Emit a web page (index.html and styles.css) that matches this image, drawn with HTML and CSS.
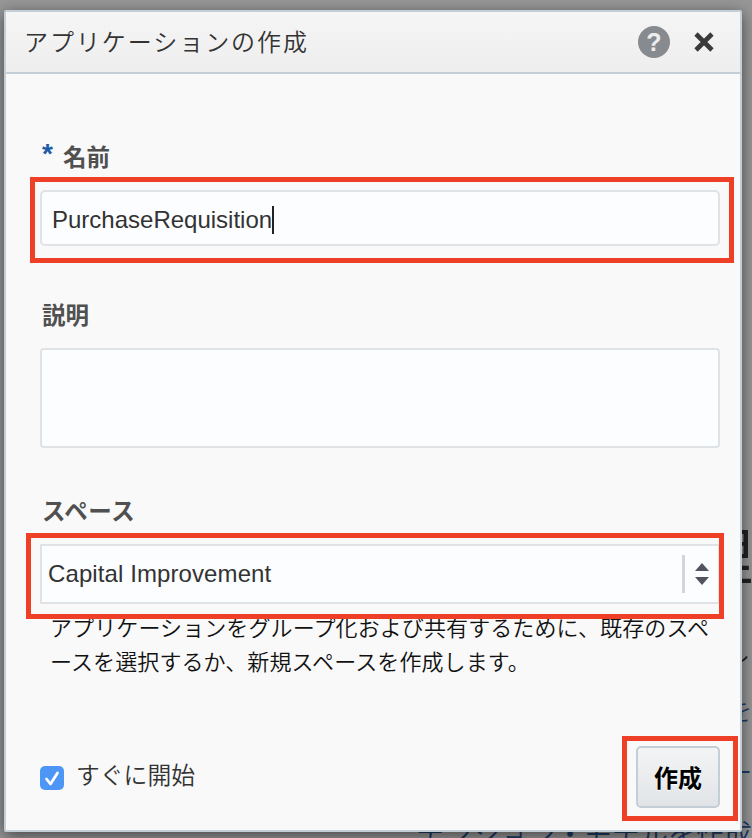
FILE: index.html
```html
<!DOCTYPE html>
<html lang="ja">
<head>
<meta charset="utf-8">
<title>アプリケーションの作成</title>
<link rel="stylesheet" href="styles.css">
</head>
<body>
<div class="backdrop" aria-hidden="true">
  <span class="ghost ghost-heading">理</span>
  <span class="ghost ghost-text">し</span>
  <span class="ghost ghost-link link-a">を</span>
  <span class="ghost ghost-link link-b">ー</span>
  <span class="ghost ghost-link link-c">テンション・モデルを作成</span>
</div>
<main class="dialog">
  <header class="dialog-header">
    <h1>アプリケーションの作成</h1>
    <span class="help">?</span>
    <svg class="close" viewBox="0 0 22 22"><path d="M3 3 19 19M19 3 3 19"/></svg>
  </header>
  <form class="form">
    <label class="label name-label"><span class="required">*</span>名前</label>
    <div class="marked mark-name"><div class="input">PurchaseRequisition<i class="caret"></i></div></div>
    <label class="label description-label">説明</label>
    <div class="textarea"></div>
    <label class="label space-label">スペース</label>
    <div class="marked mark-space">
      <div class="select"><span>Capital Improvement</span>
        <svg class="spinner" viewBox="0 0 16 24"><path d="M1 9 8 1 15 9ZM1 15 8 23 15 15Z"/></svg>
      </div>
    </div>
    <p class="hint">アプリケーションをグループ化および共有するために、既存のスペ<br>ースを選択するか、新規スペースを作成します。</p>
    <div class="footer">
      <span class="checkbox"><svg viewBox="0 0 24 24"><path d="M6.5 13 10.5 18 17.5 7"/></svg></span>
      <span class="check-label">すぐに開始</span>
      <div class="marked mark-create"><div class="button">作成</div></div>
    </div>
  </form>
</main>
</body>
</html>
```
FILE: styles.css
```css
* { box-sizing: border-box; }
body {
  margin: 0;
  width: 752px;
  height: 838px;
  padding: 10px 10px 6px 4px;
  overflow: hidden;
  position: relative;
  background: #979797;
  font-family: "Liberation Sans", "Noto Sans CJK JP", sans-serif;
  color: #333;
}
.backdrop { position: absolute; inset: 0; overflow: hidden; }
.ghost { position: absolute; white-space: nowrap; line-height: 1; font-weight: 350; }
.ghost-heading { left: 691px; top: 528px; font-size: 62px; font-weight: 400; color: #222; }
.ghost-text { left: 726px; top: 641px; font-size: 24px; color: #222; }
.ghost-link { color: #1d3b66; font-size: 24px; }
.link-a { left: 728px; top: 700px; }
.link-b { left: 728px; top: 761px; }
.link-c { left: 416px; top: 822px; font-size: 28px; }

.dialog {
  position: relative;
  height: 822px;
  border: 2px solid #c4ced7;
  border-radius: 2px;
  background: #f9f9f9;
  box-shadow: 0 4px 16px rgba(0, 0, 0, .55);
}
.dialog-header {
  height: 62px;
  display: flex;
  align-items: center;
  padding: 0 26px 0 18px;
  border-bottom: 2px solid #c4ced7;
  background: linear-gradient(#f5f5f5, #eee);
}
h1 { flex: 1; margin: 2px 0 0; font-size: 24px; line-height: 60px; font-weight: 350; letter-spacing: 1.95px; }
.help {
  width: 32px;
  height: 32px;
  border-radius: 50%;
  background: #878b90;
  color: #ededed;
  font-size: 25px;
  font-weight: bold;
  line-height: 33px;
  text-align: center;
}
.close { width: 22px; height: 22px; margin-left: 23px; margin-right: -1px; }
.close path { fill: none; stroke: #3a3a3a; stroke-width: 4.6; }

.form { padding: 0 20px 0 34px; }
.label { display: block; font-size: 23.5px; line-height: 36px; font-weight: 600; color: #505050; }
.name-label { padding: 66px 0 14px 2px; display: flex; }
.required { width: 21px; font-size: 28px; line-height: 27px; color: #1d5ca8; }
.description-label { padding: 52px 0 14px 2px; }
.space-label { padding: 46px 0 14px 2px; letter-spacing: .5px; }
.input, .textarea, .select { border: 2px solid #dfe3e6; background: #fcfdff; }
.input {
  height: 56px;
  border-radius: 5px;
  display: flex;
  align-items: center;
  padding: 3px 0 0 10px;
  font-size: 24px;
}
.caret { width: 2px; height: 28px; background: #222; }
.textarea { height: 100px; border-radius: 4px; }
.select {
  height: 60px;
  display: flex;
  align-items: center;
  justify-content: space-between;
  padding: 0 8px 0 6px;
  font-size: 24px;
  letter-spacing: .1px;
}
.spinner { width: 16px; height: 24px; flex: none; }
.spinner path { fill: #55525f; }
.select span { flex: 1; height: 38px; line-height: 38px; margin-right: 9px; border-right: 3px solid #d3d5dc; }
.marked { position: relative; }
.marked::after { content: ""; position: absolute; border: 5px solid #ee4027; }
.mark-name::after { inset: -13px -14px -17px -10px; }
.mark-space::after { inset: -11px -4px -15px -14px; }
.mark-create::after { inset: -10px -18px -13px -14px; }
.hint {
  margin: 8px 0 0 10px;
  font-size: 22px;
  line-height: 34px;
  font-weight: 350;
  letter-spacing: .1px;
  color: #111;
  white-space: nowrap;
}
.footer { display: flex; align-items: center; height: 62px; margin-top: 66px; }
.checkbox { width: 24px; height: 24px; margin-top: 2px; border-radius: 5px; background: #4e96f5; }
.checkbox svg { display: block; }
.checkbox path { fill: none; stroke: #fff; stroke-width: 2.8; stroke-linecap: round; stroke-linejoin: round; }
.check-label { flex: 1; margin: -2px 0 0 12px; font-size: 23.8px; line-height: 36px; font-weight: 350; }
.button {
  width: 84px;
  height: 62px;
  border: 2px solid #c4ced7;
  border-radius: 5px;
  background: linear-gradient(#f3f4f6, #e1e4e7);
  color: #000;
  font-size: 24px;
  font-weight: bold;
  line-height: 62px;
  text-align: center;
  text-shadow: 0 1px 1px #fff;
}
```
